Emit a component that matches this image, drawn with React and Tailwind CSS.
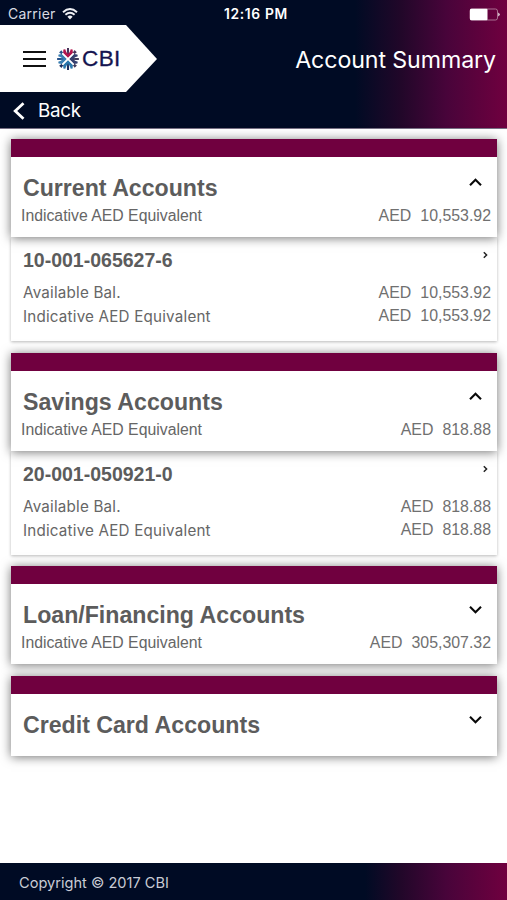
const accounts = [
  {
    title: 'Current Accounts',
    total: '10,553.92',
    open: true,
    detail: { number: '10-001-065627-6', available: '10,553.92', equivalent: '10,553.92' },
  },
  {
    title: 'Savings Accounts',
    total: '818.88',
    open: true,
    detail: { number: '20-001-050921-0', available: '818.88', equivalent: '818.88' },
  },
  { title: 'Loan/Financing Accounts', total: '305,307.32' },
  { title: 'Credit Card Accounts' },
];

function Amount({ value }) {
  return (
    <span className="flex justify-end gap-[9px] text-[15.9px] text-[#707070]">
      <span>AED</span>
      <span>{value}</span>
    </span>
  );
}

function Chevron({ up }) {
  return (
    <svg className="h-[9px] w-[13px]" viewBox="0 0 13 9" fill="none" stroke="#080808" strokeWidth="2.1">
      <path d={up ? 'M1 7.3 6.5 1.8 12 7.3' : 'M1 1.7 6.5 7.2 12 1.7'} />
    </svg>
  );
}

function Detail({ number, available, equivalent }) {
  return (
    <div className="flex h-[104px] justify-between bg-white pl-[12px] pr-[6px] shadow-[0_1px_3px_rgba(0,0,0,0.28)]">
      <div className="pt-[12px] text-[#666]">
        <h3 className="h-[32px] text-[19.5px] font-bold leading-[22px] text-[#5c5c5c]">{number}</h3>
        <p className="h-[24px] font-['Inter'] text-[15.2px] leading-[24px] tracking-[0.2px]">Available Bal.</p>
        <p className="font-['Inter'] text-[15.2px] leading-[24px] tracking-[0.2px]">Indicative AED Equivalent</p>
      </div>
      <div className="flex flex-col items-end pt-[14px]">
        <svg className="mr-[3px] h-[8px] w-[5px]" viewBox="0 0 5 8" fill="none" stroke="#222" strokeWidth="1.5">
          <path d="M0.8 1.2 3.6 4 0.8 6.8" />
        </svg>
        <div className="mt-[22px] leading-[23px]">
          <Amount value={available} />
          <Amount value={equivalent} />
        </div>
      </div>
    </div>
  );
}

function AccountCard({ title, total, open, detail }) {
  return (
    <section>
      <div
        className={
          'relative z-10 border-t-[18px] border-[#70003f] bg-white shadow-[0_1px_10px_rgba(0,0,0,0.55)] ' +
          (total ? 'h-[98px]' : 'h-[79.5px]')
        }
      >
        <div className="flex h-[48px] justify-between pl-[12px] pr-[15px] pt-[17px]">
          <h2 className="whitespace-nowrap text-[23.15px] font-bold leading-[29px] text-[#5c5c5c]">{title}</h2>
          <div className="pt-[4px]">
            <Chevron up={open} />
          </div>
        </div>
        {total && (
          <div className="flex justify-between pl-[10px] pr-[6px] text-[15.8px] leading-[22px] text-[#666]">
            <span>Indicative AED Equivalent</span>
            <Amount value={total} />
          </div>
        )}
      </div>
      {detail && <Detail {...detail} />}
    </section>
  );
}

const quadrants = [
  { angle: 0, fill: '#b3164e', tip: '#48335a' },
  { angle: 90, fill: '#35406f', tip: '#3f3b5c' },
  { angle: 180, fill: '#2c78ad', tip: '#1c2f60' },
  { angle: 270, fill: '#3b7fb2', tip: '#27528a' },
];

function Emblem() {
  return (
    <svg className="h-[22px] w-[22px]" viewBox="-11 -11 22 22">
      {quadrants.map(({ angle, fill, tip }) => (
        <g key={angle} transform={`rotate(${angle})`}>
          <path d="M0 -1-4.9 -6-4.6 -9.4-2.7 -9.8-1.6 -6.6H1.6L2.7 -9.8 4.6 -9.4 4.9 -6Z" fill={fill} />
          <path d="M0 -4.2-1.1 -7-1 -10.9H1L1.1 -7Z" fill={tip} />
          <path d="M4.6 -6.2 6.6 -8.9 8.8 -6.7 6 -4.6Z" fill={tip} />
        </g>
      ))}
      <path d="M-5.8 -5.8 5.8 5.8M5.8 -5.8-5.8 5.8" stroke="#fff" strokeWidth="1.4" />
    </svg>
  );
}

export default function App() {
  return (
    <div className="flex h-[900px] w-[507px] flex-col overflow-hidden bg-white font-['Liberation_Sans',Arial,sans-serif]">
      <header className="h-[129px] shrink-0 border-b border-[#777084] bg-[linear-gradient(90deg,#000b24_0%,#000b24_70%,#210729_79%,#48043a_88%,#70003f_100%)] font-['Inter',sans-serif] text-white">
        <div className="grid h-[25px] grid-cols-[1fr_auto_1fr] items-center pl-[8px] pr-[7px] pt-[3px] text-[13px] leading-[20px]">
          <div className="flex items-center gap-[6px] text-[#d8dbe2]">
            <span className="text-[14px] tracking-[0.25px]">Carrier</span>
            <svg className="h-[12px] w-[16px]" viewBox="0 0 16 12" fill="none" stroke="#eef0f4" strokeWidth="1.9">
              <path d="M1 4.2Q8-2.2 15 4.2M3.4 6.8Q8 2.6 12.6 6.8" />
              <path d="M5.4 8.7Q8 6.5 10.6 8.7L8 11.5Z" fill="#eef0f4" stroke="none" />
            </svg>
          </div>
          <span className="mr-[-4px] text-[13.8px] font-semibold tracking-[0.65px]">12:16 PM</span>
          <svg className="h-[13px] w-[31px] justify-self-end" viewBox="0 0 31 13">
            <rect x="1" y="1" width="27.5" height="11" rx="2" fill="none" stroke="#aa7191" />
            <rect x="1" y="0.8" width="17.5" height="11.4" rx="1" fill="#fff" />
            <path d="M29.3 4.4Q32 6.5 29.3 8.6Z" fill="#fff" />
          </svg>
        </div>
        <div className="flex h-[67px] items-center justify-between pr-[11px]">
          <div className="flex h-[67px] w-[157px] items-center bg-white pl-[23px] [clip-path:polygon(0_0,126px_0,157px_34px,126px_100%,0_100%)]">
            <div className="flex h-[16px] w-[23px] flex-col justify-between">
              <i className="h-[2px] bg-[#111]" />
              <i className="h-[2px] bg-[#111]" />
              <i className="h-[2px] bg-[#111]" />
            </div>
            <div className="ml-[11px] flex items-center gap-[3px]">
              <Emblem />
              <span className="font-['Liberation_Sans'] text-[22.5px] leading-[24px] tracking-[0.4px] text-[#141450] [-webkit-text-stroke:0.3px_#141450]">CBI</span>
            </div>
          </div>
          <h1 className="pt-[2px] text-[23.2px] leading-[30px] tracking-[-0.1px]">Account Summary</h1>
        </div>
        <div className="flex h-[36px] items-center gap-[13px] pl-[13px]">
          <svg className="mt-[1px] h-[18px] w-[12px]" viewBox="0 0 12 18" fill="none" stroke="#fff" strokeWidth="2.8">
            <path d="M10.5 1.3 2.2 9l8.3 7.7" />
          </svg>
          <span className="pt-[2px] text-[18.8px] leading-[24px] tracking-[-0.3px]">Back</span>
        </div>
      </header>
      <main className="flex flex-1 flex-col gap-[11.7px] pl-[11px] pr-[10px] pt-[10px]">
        {accounts.map((account) => (
          <AccountCard key={account.title} {...account} />
        ))}
      </main>
      <footer className="flex h-[37px] shrink-0 items-center bg-[linear-gradient(90deg,#000b24_0%,#000b24_72%,#210729_79%,#48043a_88%,#70003f_100%)] pl-[19px] pt-[2px] font-['Inter',sans-serif] text-[14.6px] leading-[22px] text-[#c9ccd5]">
        Copyright © 2017 CBI
      </footer>
    </div>
  );
}
